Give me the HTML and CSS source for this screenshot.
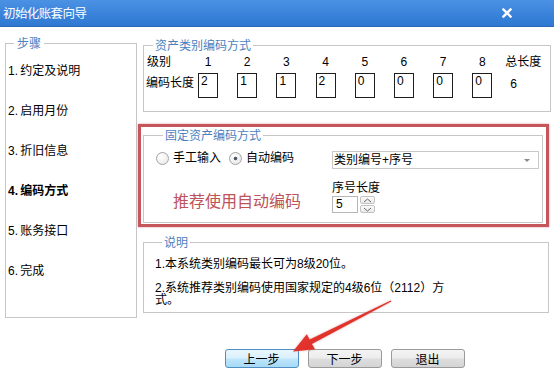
FILE: index.html
```html
<!doctype html>
<html lang="zh-CN">
  <head>
    <meta charset="UTF-8" />
    <meta name="viewport" content="width=device-width, initial-scale=1.0" />
    <title>初始化账套向导</title>
    <link rel="stylesheet" href="styles.css">
  </head>
  <body>
    <div class="window">
      <div class="titlebar">
        <span class="title">初始化账套向导</span>
        <svg class="close" width="10" height="10" viewBox="0 0 10 10">
          <path d="M1.5 1.5 L8.5 8.5 M8.5 1.5 L1.5 8.5" stroke="#fff" stroke-width="2.4" stroke-linecap="square" />
        </svg>
      </div>

      <div class="main">
        <fieldset class="group steps">
          <legend>步骤</legend>
          <ul>
            <li>1. 约定及说明</li>
            <li>2. 启用月份</li>
            <li>3. 折旧信息</li>
            <li class="current">4. 编码方式</li>
            <li>5. 账务接口</li>
            <li>6. 完成</li>
          </ul>
        </fieldset>

        <div class="content">
          <fieldset class="group levels">
            <legend>资产类别编码方式</legend>
            <div class="level-grid">
              <span class="label">级别</span>
              <span class="num">1</span>
              <span class="num">2</span>
              <span class="num">3</span>
              <span class="num">4</span>
              <span class="num">5</span>
              <span class="num">6</span>
              <span class="num">7</span>
              <span class="num">8</span>
              <span class="total">总长度</span>

              <span class="label label-code">编码长度</span>
              <div class="code-box">2</div>
              <div class="code-box">1</div>
              <div class="code-box">1</div>
              <div class="code-box">2</div>
              <div class="code-box">0</div>
              <div class="code-box">0</div>
              <div class="code-box">0</div>
              <div class="code-box">0</div>
              <span class="total total-value">6</span>
            </div>
          </fieldset>

          <div class="highlight">
            <fieldset class="group asset-code">
              <legend>固定资产编码方式</legend>
              <div class="asset-grid">
                <div class="radios">
                  <label class="radio"><span class="dot"></span>手工输入</label>
                  <label class="radio"><span class="dot checked"></span>自动编码</label>
                </div>
                <div class="select">
                  <span>类别编号+序号</span>
                  <span class="caret"></span>
                </div>
                <div class="tip">推荐使用自动编码</div>
                <div class="seq">
                  <div class="seq-label">序号长度</div>
                  <div class="spinner">
                    <div class="spin-input">5</div>
                    <div class="spin-btns">
                      <span class="spin-btn">
                        <svg width="9" height="5" viewBox="0 0 9 5"><path d="M1 4 L4.5 1 L8 4" fill="none" stroke="#6a6a6a" stroke-width="1" /></svg>
                      </span>
                      <span class="spin-btn">
                        <svg width="9" height="5" viewBox="0 0 9 5"><path d="M1 1 L4.5 4 L8 1" fill="none" stroke="#6a6a6a" stroke-width="1" /></svg>
                      </span>
                    </div>
                  </div>
                </div>
              </div>
            </fieldset>
          </div>

          <fieldset class="group notes">
            <legend>说明</legend>
            <p>1.本系统类别编码最长可为8级20位。</p>
            <p>2.系统推荐类别编码使用国家规定的4级6位（2112）方式。</p>
          </fieldset>

          <div class="buttons">
            <button class="btn hover">上一步</button>
            <button class="btn">下一步</button>
            <button class="btn">退出</button>
          </div>
        </div>
      </div>

      <!-- annotation arrow drawn over the dialog -->
      <svg class="arrow" viewBox="0 0 554 374" width="554" height="374">
        <defs>
          <linearGradient id="arrowFill" x1="0" y1="0" x2="1" y2="1">
            <stop offset="0" stop-color="#f0443c" />
            <stop offset="1" stop-color="#d2221c" />
          </linearGradient>
        </defs>
        <polygon
          points="390.7,300.5 309.7,339.6 306.8,334.2 293,351.5 315,349.2 311.9,344 391.3,301.5"
          fill="url(#arrowFill)" />
      </svg>
    </div>
  </body>
</html>
```

FILE: styles.css
```css
* {
  box-sizing: border-box;
}

body {
  margin: 0;
  background: #fff;
  font-family: "Liberation Sans", "Noto Sans CJK SC", sans-serif;
  font-size: 12px;
  color: #000;
}

.window {
  position: relative;
  width: 554px;
  height: 374px;
  overflow: hidden;
  background: #fff;
}

/* title bar */

.titlebar {
  height: 27px;
  display: flex;
  align-items: center;
  justify-content: space-between;
  padding: 0 42px 0 3px;
  background: linear-gradient(#4b92e4, #3a83da 55%, #3079d2);
  border-bottom: 1px solid #2c68b8;
}

.title {
  color: #fff;
  font-family: "Noto Sans CJK SC", sans-serif;
  font-size: 12.5px;
  letter-spacing: -0.6px;
  line-height: 16px;
}

.close {
  display: block;
}

/* layout */

.main {
  display: flex;
  align-items: flex-start;
}

.content {
  width: 413px;
  margin-left: 1px;
  display: flex;
  flex-direction: column;
}

/* group boxes */

.group {
  margin: 0;
  padding: 0;
  min-inline-size: 0;
  border: 1px solid #c6c6c6;
}

.group legend {
  padding: 0 2px;
  margin-left: 7px;
  line-height: 14px;
  color: #4c7fc0;
  font-family: "Noto Sans CJK SC", sans-serif;
  font-size: 12px;
}

/* steps */

.steps {
  width: 132px;
  height: 282px;
  margin: 9px 0 0 5px;
  padding: 14px 0 0 2px;
}

.steps legend {
  margin-left: 6px;
  padding: 0 3px;
}

.steps ul {
  list-style: none;
  margin: 0;
  padding: 0;
  display: flex;
  flex-direction: column;
  gap: 26px;
}

.steps li {
  line-height: 14px;
  word-spacing: -1px;
}

.steps li.current {
  font-weight: bold;
}

/* level lengths */

.levels {
  width: 408px;
  height: 74px;
  margin: 11px 0 0 5px;
  padding: 3px 0 0 2px;
}

.level-grid {
  display: grid;
  grid-template-columns: 52px repeat(7, 39.2px) 33px auto;
  grid-template-rows: 14px 25px;
  row-gap: 4px;
  line-height: 14px;
}

.label {
  padding-left: 1px;
}

.label-code {
  margin-top: 3px;
  padding-left: 0;
}

.num {
  width: 20px;
  text-align: center;
}

.code-box {
  width: 20px;
  height: 25px;
  border: 1px solid #1e1e1e;
  padding: 1px 0 0 2px;
  line-height: 12px;
}

.total-value {
  margin-top: 4px;
  padding-left: 5px;
}

/* highlighted asset code block */

.highlight {
  width: 411px;
  height: 103px;
  margin-top: 12px;
  border: 3px solid #c5565b;
  box-shadow: 0 0 2px rgba(197, 86, 91, 0.6);
  padding: 1px 3px 1px 2px;
}

.asset-code {
  height: 95px;
  padding: 9px 3px 0 12px;
}

.asset-grid {
  display: grid;
  grid-template-columns: 176px 1fr;
  grid-template-rows: 18px auto;
  row-gap: 12px;
}

.radios {
  display: flex;
  gap: 8px;
  height: 14px;
  align-items: center;
  line-height: 14px;
}

.radio {
  display: flex;
  align-items: center;
  gap: 4px;
}

.dot {
  width: 13px;
  height: 13px;
  border-radius: 50%;
  border: 1px solid #a4a4a4;
  background: radial-gradient(circle at 40% 35%, #ffffff, #e6e6e6);
}

.dot.checked {
  background:
    radial-gradient(circle, #4a4f57 0, #5d6570 1.6px, transparent 2.2px),
    radial-gradient(circle at 40% 35%, #ffffff, #e2e2e2);
}

.select {
  height: 18px;
  border: 1px solid #c9c9c9;
  display: flex;
  align-items: center;
  justify-content: space-between;
  padding: 0 8px 0 1px;
  line-height: 14px;
}

.caret {
  width: 0;
  height: 0;
  border-left: 3px solid transparent;
  border-right: 3px solid transparent;
  border-top: 3px solid #8a8a8a;
}

.tip {
  align-self: end;
  margin: 0 0 3px 17px;
  font-family: "Noto Sans CJK SC", sans-serif;
  font-size: 16px;
  line-height: 20px;
  color: #bd5258;
}

.seq-label {
  line-height: 14px;
  margin-bottom: 1px;
}

.spinner {
  display: flex;
  gap: 2px;
}

.spin-input {
  width: 26px;
  height: 17px;
  border: 1px solid #b7b7b7;
  padding-left: 3px;
  line-height: 15px;
}

.spin-btns {
  display: flex;
  flex-direction: column;
  gap: 1px;
}

.spin-btn {
  width: 15px;
  height: 8px;
  border: 1px solid #c3c3c3;
  border-radius: 2px;
  background: linear-gradient(#fbfbfb, #e9e9e9);
  display: flex;
  align-items: center;
  justify-content: center;
}

.spin-btn svg {
  display: block;
}

/* notes */

.notes {
  width: 406px;
  height: 78px;
  margin: 8px 0 0 5px;
  padding: 9px 0 0 11px;
}

.notes p {
  margin: 0;
  width: 296px;
  line-height: 12px;
}

.notes p + p {
  margin-top: 12px;
}

/* buttons */

.buttons {
  margin-top: 36px;
  display: flex;
  justify-content: center;
  gap: 9px;
}

.btn {
  width: 74px;
  height: 19px;
  padding: 0;
  border: 1px solid #9a9a9a;
  border-radius: 3px;
  background: linear-gradient(#f4f4f4 0%, #ececec 48%, #dedede 52%, #d4d4d4 100%);
  font-family: "Noto Sans CJK SC", sans-serif;
  font-size: 12px;
  line-height: 15px;
  color: #000;
}

.btn.hover {
  border-color: #4f8fc4;
  background: linear-gradient(#eaf6fd 0%, #d9f0fc 48%, #bee6fd 52%, #a7d9f5 100%);
}

/* annotation */

.arrow {
  position: absolute;
  top: 0;
  left: 0;
  pointer-events: none;
  filter: drop-shadow(0 0 1px rgba(160, 20, 20, 0.35));
}
```
